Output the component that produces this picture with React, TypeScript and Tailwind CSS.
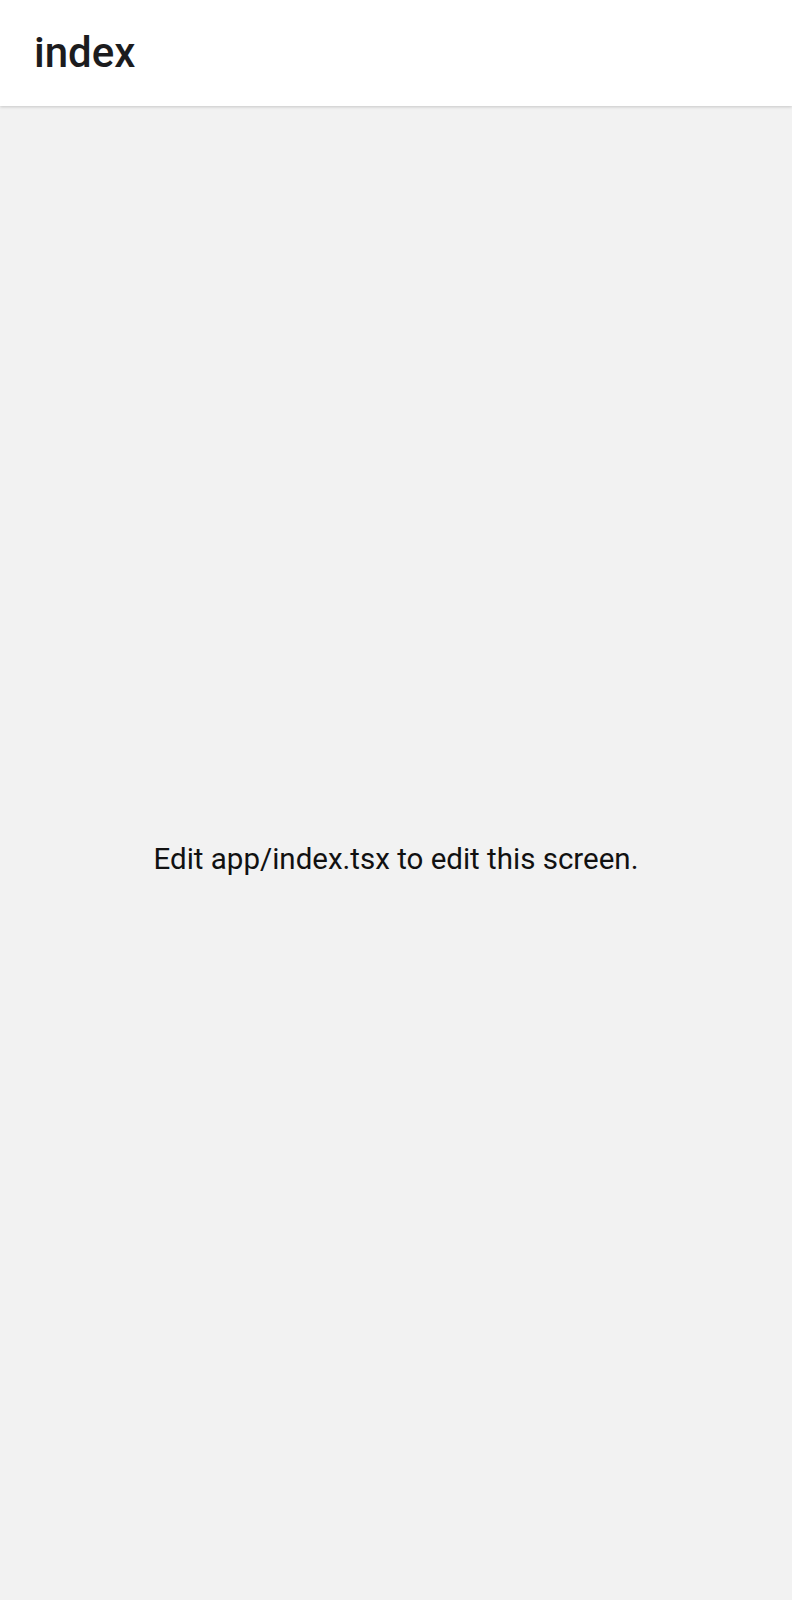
import React from "react";

export default function App() {
  return (
    <div className="flex h-[1600px] w-full flex-col bg-[#f2f2f2] font-['Roboto',sans-serif]">
      <header className="relative z-10 flex h-[106px] shrink-0 items-center bg-white pl-[34px] shadow-[0_1px_3px_rgba(0,0,0,0.18)]">
        <h1 className="text-[42px] font-medium leading-none text-[#1c1c1e]">index</h1>
      </header>
      <main className="flex flex-1 items-center justify-center pt-[14px]">
        <p className="text-[29.5px] leading-none text-[#111]">Edit app/index.tsx to edit this screen.</p>
      </main>
    </div>
  );
}
